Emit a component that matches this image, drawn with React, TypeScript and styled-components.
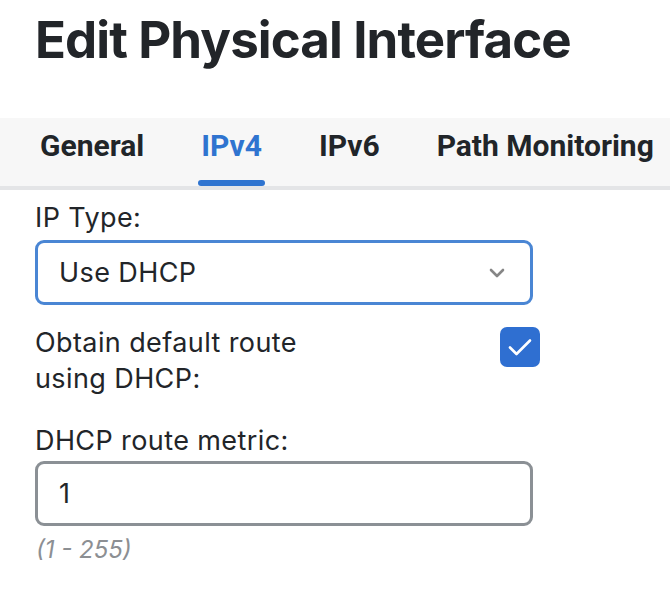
import React from "react";
import styled, { createGlobalStyle } from "styled-components";

const GlobalStyle = createGlobalStyle`
  html, body {
    margin: 0;
    padding: 0;
    background: #ffffff;
  }
  body {
    font-family: Inter, "Noto Sans", sans-serif;
    color: #222529;
  }
`;

const Page = styled.div`
  width: 670px;
  overflow: hidden;
`;

const Title = styled.h1`
  margin: 9px 0 0 35px;
  font-family: Inter, sans-serif;
  font-weight: 700;
  font-size: 51px;
  line-height: 62px;
  color: #222529;
  letter-spacing: -0.9px;
`;

const TabBar = styled.div`
  margin-top: 47px;
  height: 68px;
  background: #f7f7f7;
  border-bottom: 4px solid #e4e5e7;
  display: flex;
  align-items: stretch;
  gap: 51px;
  padding-left: 37px;
`;

const Tab = styled.div<{ $active?: boolean }>`
  position: relative;
  padding: 10px 3px 0;
  font-family: Roboto, sans-serif;
  font-weight: 700;
  font-size: 30px;
  line-height: 36px;
  white-space: nowrap;
  color: ${(p) => (p.$active ? "#2f74d0" : "#212529")};

  &::after {
    content: "";
    display: ${(p) => (p.$active ? "block" : "none")};
    position: absolute;
    left: 0;
    right: 0;
    bottom: 0;
    height: 6px;
    border-radius: 3px;
    background: #2f74d0;
  }
`;

const Form = styled.div`
  padding: 10px 0 0 35px;
  width: 498px;
  display: flex;
  flex-direction: column;
`;

const Label = styled.div<{ $gap?: number }>`
  margin-top: ${(p) => p.$gap ?? 0}px;
  font-size: 27px;
  line-height: 36px;
  letter-spacing: 0.4px;
  color: #222529;
`;

const Field = styled.div<{ $focused?: boolean; $gap?: number }>`
  box-sizing: border-box;
  margin-top: ${(p) => p.$gap ?? 0}px;
  height: 65px;
  border: 3px solid ${(p) => (p.$focused ? "#4a86d4" : "#8b9095")};
  border-radius: 9px;
  display: flex;
  align-items: center;
  justify-content: space-between;
  padding: 0 25px 0 21px;
  font-size: 27px;
  letter-spacing: 0.4px;
  color: #222529;
  background: #fff;
`;

const Chevron = styled.svg`
  width: 16px;
  height: 10px;
  color: #868686;
`;

const CheckRow = styled.div`
  margin-top: 20px;
  display: flex;
  justify-content: space-between;
  align-items: flex-start;
`;

const CheckLabel = styled(Label)`
  width: 320px;
`;

const Checkbox = styled.div`
  margin-top: 2px;
  margin-right: -7px;
  width: 40px;
  height: 40px;
  border-radius: 7px;
  background: #2f6fd1;
  display: flex;
  align-items: center;
  justify-content: center;
`;

const Hint = styled.div`
  margin-top: 9px;
  padding-left: 1px;
  font-size: 24px;
  line-height: 30px;
  font-style: italic;
  color: #8c8f93;
`;

export default function App() {
  return (
    <Page>
      <GlobalStyle />
      <Title>Edit Physical Interface</Title>
      <TabBar>
        <Tab>General</Tab>
        <Tab $active>IPv4</Tab>
        <Tab>IPv6</Tab>
        <Tab>Path Monitoring</Tab>
      </TabBar>
      <Form>
        <Label>IP Type:</Label>
        <Field $focused $gap={4}>
          <span>Use DHCP</span>
          <Chevron viewBox="0 0 16 10" fill="none">
            <path
              d="M2 2l6 6 6-6"
              stroke="currentColor"
              strokeWidth="2.6"
              strokeLinecap="round"
              strokeLinejoin="round"
            />
          </Chevron>
        </Field>
        <CheckRow>
          <CheckLabel>
            Obtain default route
            <br />
            using DHCP:
          </CheckLabel>
          <Checkbox>
            <svg width="26" height="20" viewBox="0 0 26 20" fill="none">
              <path
                d="M3 10.5l6.5 6.5L23 3.5"
                stroke="#fff"
                strokeWidth="2.6"
                strokeLinecap="round"
                strokeLinejoin="round"
              />
            </svg>
          </Checkbox>
        </CheckRow>
        <Label $gap={26}>DHCP route metric:</Label>
        <Field $gap={2}>
          <span>1</span>
        </Field>
        <Hint>(1 - 255)</Hint>
      </Form>
    </Page>
  );
}
